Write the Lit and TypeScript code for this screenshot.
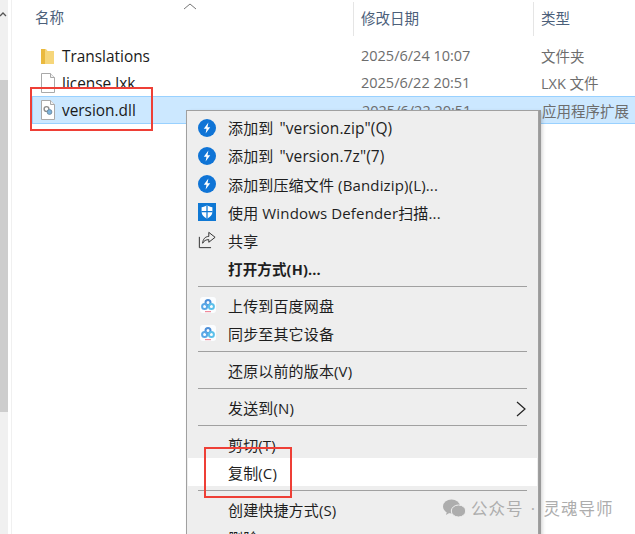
import { LitElement, css, html, svg } from "lit";
import { customElement } from "lit/decorators.js";

const bolt = html`<svg class="ico" viewBox="0 0 18 18">
  <circle cx="9" cy="9" r="9" fill="#0f74d6"></circle>
  <path d="M10.4 3.6 5.8 9.8h2.7l-.9 4.6 4.6-6.2H9.5z" fill="#fff"></path>
</svg>`;

const shield = html`<svg class="ico" viewBox="0 0 20 20">
  <rect width="20" height="20" fill="#0f78d4"></rect>
  <path d="M10 2.6c2 1.3 3.9 1.9 6 2v5.2c0 3.4-2.3 6-6 7.6-3.7-1.6-6-4.2-6-7.6V4.6c2.1-.1 4-.7 6-2z" fill="#fff"></path>
  <path d="M9.3 2.6h1.4v15h-1.4zM3.8 9h12.4v1.4H3.8z" fill="#0f78d4"></path>
</svg>`;

const share = html`<svg class="ico" viewBox="0 0 20 20" fill="none" stroke="#333" stroke-width="1.1">
  <path d="M1.5 6.5v12h13"></path>
  <path d="M12 1.5 19 7l-7 5.5V9.6c-3.2 0-5.4 1.2-6.8 4 .2-4.4 2.6-7.4 6.8-7.6z"></path>
</svg>`;

const baidu = html`<svg class="ico baidu" viewBox="0 0 16 16" fill="none" stroke-width="2">
  <rect width="16" height="16" rx="3" fill="#fbfdff" stroke="none"></rect>
  <circle cx="8" cy="5.4" r="2.5" stroke="#4d8fd8"></circle>
  <circle cx="4.6" cy="9.6" r="2.5" stroke="#5aa7e6"></circle>
  <circle cx="11.4" cy="9.6" r="2.5" stroke="#5cc0ea"></circle>
  <path d="M5 14.6h6" stroke="#f08a9a" stroke-width="1.2"></path>
</svg>`;

const fileIcon = svg`<path d="M1.5.5h9l4 4v15h-13z" fill="#fff" stroke="#a9a9a9"></path><path d="M10.5.5v4h4" fill="#f2f2f2" stroke="#a9a9a9"></path>`;

type Entry =
  | { icon?: unknown; label: string; latin?: string; bold?: boolean; arrow?: boolean; hot?: boolean }
  | "sep";

const entries: Entry[] = [
  { icon: bolt, label: "添加到 ", latin: '"version.zip"(Q)' },
  { icon: bolt, label: "添加到 ", latin: '"version.7z"(7)' },
  { icon: bolt, label: "添加到压缩文件 (Bandizip)(L)..." },
  { icon: shield, label: "使用 Windows Defender扫描..." },
  { icon: share, label: "共享" },
  { label: "打开方式(H)...", bold: true },
  "sep",
  { icon: baidu, label: "上传到百度网盘" },
  { icon: baidu, label: "同步至其它设备" },
  "sep",
  { label: "还原以前的版本(V)" },
  "sep",
  { label: "发送到(N)", arrow: true },
  "sep",
  { label: "剪切(T)" },
  { label: "复制(C)", hot: true },
  "sep",
  { label: "创建快捷方式(S)" },
  { label: "删除(D)" },
];

const files = [
  { name: "Translations", date: "2025/6/24 10:07", type: "文件夹", kind: "folder" },
  { name: "license.lxk", date: "2025/6/22 20:51", type: "LXK 文件", kind: "plain" },
  { name: "version.dll", date: "2025/6/22 20:51", type: "应用程序扩展", kind: "dll", selected: true },
];

@customElement("app-root")
export class AppRoot extends LitElement {
  static styles = css`
    :host {
      display: block;
      position: relative;
      width: 635px;
      height: 534px;
      overflow: hidden;
      background: #fff;
      font-family: "Open Sans", "Noto Sans CJK SC", sans-serif;
      color: #1a1a1a;
    }
    .page {
      display: flex;
      height: 100%;
    }
    .scroll {
      width: 8px;
      flex: none;
      background: #f0f0f0;
      display: flex;
      flex-direction: column;
    }
    .scroll .arrow {
      height: 80px;
      padding: 11px 0 0 0;
      box-sizing: border-box;
      font-size: 0;
    }
    .scroll .thumb {
      height: 332px;
      background: #cdcdcd;
    }
    .pane {
      flex: 1;
      margin-left: 3px;
      border-left: 1px solid #f0f0f0;
      min-width: 0;
    }
    .head {
      display: grid;
      grid-template-columns: 341px 180px 1fr;
      height: 34px;
      margin-top: 2px;
      position: relative;
      color: #4c607a;
      font-size: 14.5px;
    }
    .head div {
      padding: 0 0 0 23px;
      line-height: 31px;
    }
    .head div + div {
      border-left: 1px solid #e5e5e5;
      padding-left: 7px;
      line-height: 33px;
    }
    .sort {
      position: absolute;
      left: 171px;
      top: 0;
    }
    .files {
      margin-top: 6px;
      padding-left: 20px;
    }
    .row {
      display: grid;
      grid-template-columns: 321px 180px 1fr;
      height: 27px;
      align-items: center;
      font-size: 15.4px;
      box-sizing: border-box;
      white-space: nowrap;
    }
    .row .name {
      display: flex;
      align-items: center;
      gap: 6px;
      padding-left: 8px;
    }
    .row:not(.selected) .name span {
      padding-top: 2px;
    }
    .row .date {
      padding-left: 8px;
      color: #6d6d6d;
      font-size: 14.5px;
    }
    .row .type {
      padding-left: 8px;
      color: #6d6d6d;
      font-size: 14.5px;
    }
    .row.selected {
      background: #cce8ff;
      border: 1px solid #99d1ff;
      border-right: none;
      height: 28px;
    }
    .row.selected .name {
      padding-left: 7px;
    }
    .row svg {
      width: 16px;
      height: 20px;
      flex: none;
    }
    .menu {
      position: absolute;
      left: 186px;
      top: 110px;
      width: 353px;
      height: 440px;
      box-sizing: border-box;
      padding: 3px 1px 3px 1px;
      background: #eeeeee;
      border: 1px solid #a0a0a0;
      border-bottom: none;
      box-shadow: 2px 0 0 #9a9a9a, 3px 2px 4px rgba(0, 0, 0, 0.2);
      font-size: 15px;
      letter-spacing: 0.15px;
      color: #1e1e1e;
    }
    .item {
      display: flex;
      align-items: center;
      height: 28px;
      position: relative;
      white-space: nowrap;
    }
    .item.hot {
      background: #fff;
    }
    .item.bold {
      font-weight: 700;
      font-size: 14.5px;
    }
    .slot {
      width: 40px;
      flex: none;
      display: flex;
      justify-content: flex-start;
      padding-left: 10px;
      box-sizing: border-box;
    }
    .latin {
      font-size: 15.5px;
      letter-spacing: 0.1px;
      margin-left: 2px;
    }
    .ico {
      width: 18px;
      height: 18px;
      display: block;
    }
    .ico.baidu {
      margin-left: 2px;
      width: 16px;
      height: 16px;
    }
    .caret {
      position: absolute;
      right: 11px;
      top: 7px;
      width: 10px;
      height: 18px;
    }
    .sep {
      height: 1px;
      margin: 4px 10px 4px 10px;
      background: #a0a0a0;
    }
    .mark {
      position: absolute;
      border: 2px solid #ee3f36;
      box-sizing: border-box;
    }
    .mark.file {
      left: 30px;
      top: 87px;
      width: 123px;
      height: 44px;
    }
    .mark.copy {
      left: 204px;
      top: 447px;
      width: 88px;
      height: 51px;
    }
    .wm {
      position: absolute;
      left: 443px;
      top: 496px;
      display: flex;
      align-items: center;
      gap: 5px;
      font-size: 16.5px;
      letter-spacing: 1px;
      word-spacing: 2px;
      color: #adadad;
      white-space: nowrap;
    }
    .wm svg {
      width: 23px;
      height: 19px;
    }
  `;

  renderFile(kind: string) {
    if (kind === "folder") {
      return html`<svg viewBox="0 0 16 20">
        <path d="M1 3h5l1.5 2H14v13H1z" fill="#f6d67a"></path>
        <path d="M1 3h4v15H1z" fill="#eab93e"></path>
      </svg>`;
    }
    if (kind === "dll") {
      return html`<svg viewBox="0 0 16 20">
        ${fileIcon}
        <circle cx="6.5" cy="9" r="2.4" fill="none" stroke="#8d8d8d" stroke-width="1.4"></circle>
        <circle cx="9.5" cy="12" r="2.4" fill="#7db4dc" stroke="#6f8ea6"></circle>
      </svg>`;
    }
    return html`<svg viewBox="0 0 16 20">${fileIcon}</svg>`;
  }

  renderEntry(e: Entry) {
    if (e === "sep") return html`<div class="sep"></div>`;
    return html`<div class="item ${e.hot ? "hot" : ""} ${e.bold ? "bold" : ""}">
      <span class="slot">${e.icon ?? ""}</span>
      <span>${e.label}${e.latin ? html`<span class="latin">${e.latin}</span>` : ""}</span>
      ${e.arrow
        ? html`<svg class="caret" viewBox="0 0 10 18" fill="none" stroke="#222" stroke-width="1.2"><path d="M1 2l8 7-8 7"></path></svg>`
        : ""}
    </div>`;
  }

  render() {
    return html`
      <div class="page">
        <div class="scroll">
          <div class="arrow">
            <svg width="8" height="6" viewBox="0 0 8 6" fill="none" stroke="#555" stroke-width="1.3"><path d="M0 5l3-3 3 3"></path></svg>
          </div>
          <div class="thumb"></div>
        </div>
        <div class="pane">
          <div class="head">
            <div>名称</div>
            <div>修改日期</div>
            <div>类型</div>
            <svg class="sort" width="14" height="8" viewBox="0 0 14 8" fill="none" stroke="#777"><path d="M1 7l6-5 6 5"></path></svg>
          </div>
          <div class="files">
            ${files.map(
              (f) => html`<div class="row ${f.selected ? "selected" : ""}">
                <div class="name">${this.renderFile(f.kind)}<span>${f.name}</span></div>
                <div class="date">${f.date}</div>
                <div class="type">${f.type}</div>
              </div>`
            )}
          </div>
        </div>
      </div>
      <div class="menu">${entries.map((e) => this.renderEntry(e))}</div>
      <div class="mark file"></div>
      <div class="mark copy"></div>
      <div class="wm">
        <svg viewBox="0 0 23 19" fill="#adadad">
          <ellipse cx="8.5" cy="7.5" rx="8.5" ry="7"></ellipse>
          <path d="M4 12l-1 4 4-2.5z"></path>
          <ellipse cx="15.5" cy="12" rx="7.2" ry="6" stroke="#eee" stroke-width="1"></ellipse>
        </svg>
        <span>公众号 · 灵魂导师</span>
      </div>
    `;
  }
}
